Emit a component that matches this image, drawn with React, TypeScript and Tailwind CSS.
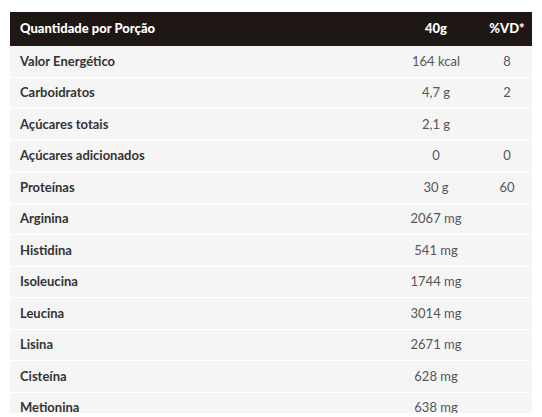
const rows: [string, string, string][] = [
  ["Valor Energético", "164 kcal", "8"],
  ["Carboidratos", "4,7 g", "2"],
  ["Açúcares totais", "2,1 g", ""],
  ["Açúcares adicionados", "0", "0"],
  ["Proteínas", "30 g", "60"],
  ["Arginina", "2067 mg", ""],
  ["Histidina", "541 mg", ""],
  ["Isoleucina", "1744 mg", ""],
  ["Leucina", "3014 mg", ""],
  ["Lisina", "2671 mg", ""],
  ["Cisteína", "628 mg", ""],
  ["Metionina", "638 mg", ""],
];

export default function App() {
  return (
    <div className="w-[542px] h-[417px] bg-white pt-3 px-[10px] font-['Lato',sans-serif]">
      <div className="h-[401px] overflow-hidden">
        <div className="flex items-center h-[34px] bg-[#1f1714] text-white text-[13px] font-black">
          <div className="flex-1 pl-[10px]">Quantidade por Porção</div>
          <div className="w-[92px] text-center">40g</div>
          <div className="w-[50px] text-center">%VD*</div>
        </div>
        {rows.map(([name, amount, vd]) => (
          <div
            key={name}
            className="flex items-center h-[31.5px] bg-[#f5f5f5] border-b border-white text-[13px]"
          >
            <div className="flex-1 pl-[10px] font-bold text-[#333]">{name}</div>
            <div className="w-[92px] text-center text-[#555]">{amount}</div>
            <div className="w-[50px] text-center text-[#555]">{vd}</div>
          </div>
        ))}
      </div>
    </div>
  );
}
